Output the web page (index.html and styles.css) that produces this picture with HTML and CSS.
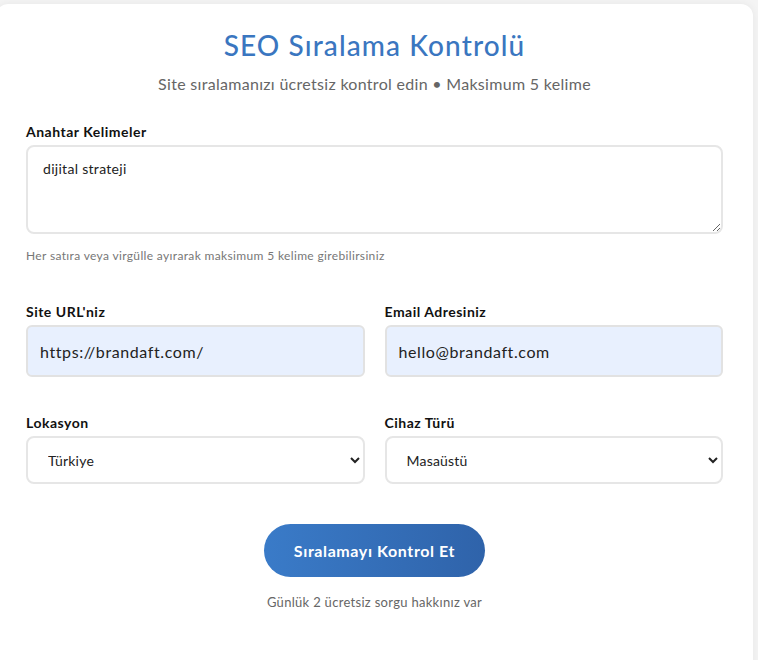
FILE: index.html
```html
<!DOCTYPE html>
<html lang="tr">
<head>
<meta charset="utf-8">
<title>SEO Sıralama Kontrolü</title>
<link rel="stylesheet" href="styles.css">
</head>
<body>
<main class="card">
  <h1 class="title">SEO Sıralama Kontrolü</h1>
  <p class="subtitle">Site sıralamanızı ücretsiz kontrol edin • Maksimum 5 kelime</p>
  <form class="form">
    <div class="field">
      <label class="label" for="kw">Anahtar Kelimeler</label>
      <textarea id="kw" class="textarea">dijital strateji</textarea>
      <p class="hint">Her satıra veya virgülle ayırarak maksimum 5 kelime girebilirsiniz</p>
    </div>
    <div class="row">
      <div class="field">
        <label class="label" for="url">Site URL'niz</label>
        <input id="url" class="input autofill" type="text" value="https://brandaft.com/">
      </div>
      <div class="field">
        <label class="label" for="mail">Email Adresiniz</label>
        <input id="mail" class="input autofill" type="text" value="hello@brandaft.com">
      </div>
    </div>
    <div class="row">
      <div class="field">
        <label class="label" for="loc">Lokasyon</label>
        <select id="loc" class="select"><option>Türkiye</option></select>
      </div>
      <div class="field">
        <label class="label" for="dev">Cihaz Türü</label>
        <select id="dev" class="select"><option>Masaüstü</option></select>
      </div>
    </div>
    <div class="actions">
      <button type="button" class="button">Sıralamayı Kontrol Et</button>
      <p class="note">Günlük 2 ücretsiz sorgu hakkınız var</p>
    </div>
  </form>
</main>
</body>
</html>
```
FILE: styles.css
```css
html, body {
  margin: 0;
  padding: 0;
}
body {
  background: #f4f4f4;
  font-family: "Lato", "Noto Sans", sans-serif;
  color: #222;
  overflow: hidden;
  height: 660px;
}
.card {
  background: #fff;
  margin: 4px 5px 0 -4px;
  padding: 24px 30px 60px 30px;
  border-radius: 12px;
  box-shadow: 0 0 8px rgba(0, 0, 0, 0.06);
  min-height: 700px;
}
.title {
  margin: 0;
  text-align: center;
  font-size: 28px;
  line-height: 34px;
  font-weight: 500;
  letter-spacing: 1.1px;
  color: #3a76c0;
}
.subtitle {
  margin: 10px 0 0;
  text-align: center;
  font-size: 16px;
  line-height: 24px;
  letter-spacing: 0.3px;
  color: #666;
}
.form {
  display: flex;
  flex-direction: column;
  margin-top: 26px;
}
.field {
  display: flex;
  flex-direction: column;
  min-width: 0;
}
.label {
  font-size: 14px;
  line-height: 20px;
  font-weight: 700;
  letter-spacing: 0.5px;
  color: #111;
  margin-bottom: 3px;
}
.textarea {
  box-sizing: border-box;
  height: 89px;
  border: 2px solid #e6e6e6;
  border-radius: 8px;
  padding: 12px 15px;
  font-family: inherit;
  font-size: 14px;
  line-height: 20px;
  letter-spacing: 0.3px;
  color: #222;
  resize: vertical;
  outline: none;
}
.hint {
  margin: 14px 0 0;
  font-size: 12px;
  line-height: 16px;
  letter-spacing: 0.35px;
  color: #777;
}
.row {
  display: grid;
  grid-template-columns: 1fr 1fr;
  gap: 20px;
  margin-top: 38px;
}
.row + .row {
  margin-top: 36px;
}
.input {
  box-sizing: border-box;
  height: 52px;
  border: 2px solid #e2e2e2;
  border-radius: 6px;
  padding: 0 12px;
  font-family: inherit;
  font-size: 16px;
  letter-spacing: 0.6px;
  color: #222;
  outline: none;
}
.autofill {
  background: #e8f0fe;
}
.select {
  box-sizing: border-box;
  height: 48px;
  border: 2px solid #e6e6e6;
  border-radius: 8px;
  padding: 0 12px 0 16px;
  font-family: inherit;
  font-size: 14px;
  letter-spacing: 0.2px;
  color: #222;
  background: #fff;
  outline: none;
}
.actions {
  display: flex;
  flex-direction: column;
  align-items: center;
  margin-top: 40px;
}
.button {
  width: 221px;
  height: 53px;
  border: none;
  border-radius: 27px;
  background: linear-gradient(90deg, #3a7bc8 0%, #2f63aa 100%);
  color: #fff;
  font-family: inherit;
  font-size: 16px;
  font-weight: 700;
  letter-spacing: 0.6px;
  cursor: pointer;
}
.note {
  margin: 16px 0 0;
  font-size: 13px;
  line-height: 18px;
  letter-spacing: 0.3px;
  color: #666;
}
```
